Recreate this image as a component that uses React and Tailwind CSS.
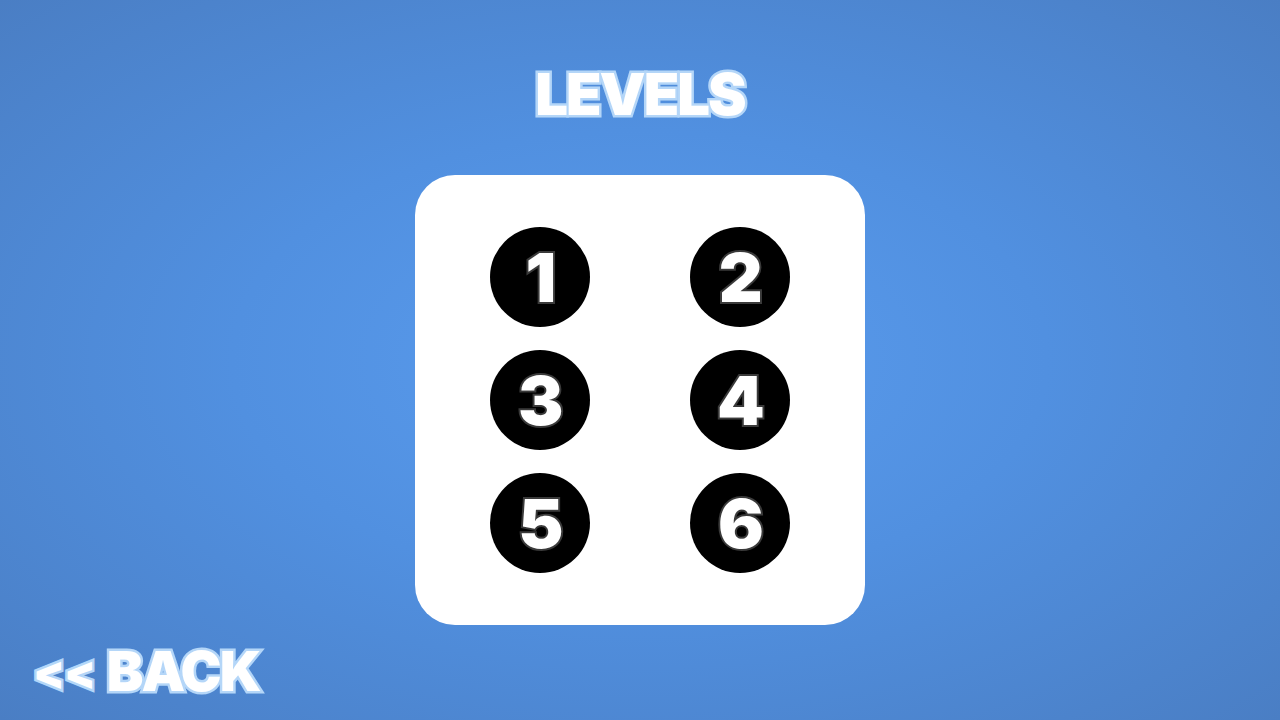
const levels = [1, 2, 3, 4, 5, 6]

const outlined = "text-white [paint-order:stroke_fill] [-webkit-text-stroke:5px_#b4d6f8]"

const LevelButton = ({ n }) => (
    <button className="w-[100px] h-[100px] rounded-full bg-black flex items-center justify-center">
        <span className="text-white text-[68px] leading-none font-black tracking-tight [paint-order:stroke_fill] [-webkit-text-stroke:4px_#3a3a3a] [font-family:Inter,'DejaVu_Sans',sans-serif]">
            {n}
        </span>
    </button>
)

export default function App() {
    return (
        <div className="w-[1280px] h-[720px] flex flex-col items-center bg-[radial-gradient(ellipse_at_center,#5a9cee_0%,#5190e0_45%,#4a7ec4_100%)] [font-family:Inter,'DejaVu_Sans',sans-serif] overflow-hidden">
            <h1 className={`mt-[63px] h-[62px] text-[58px] leading-[62px] font-black tracking-[-2px] ${outlined}`}>
                LEVELS
            </h1>

            <div className="mt-[50px] w-[450px] h-[450px] bg-white rounded-[40px] grid grid-cols-[100px_100px] justify-center content-start gap-x-[100px] gap-y-[23px] pt-[52px]">
                {levels.map((n) => (
                    <LevelButton key={n} n={n} />
                ))}
            </div>

            <div className="self-start mt-[19px] ml-[33px] flex items-center gap-[12px]">
                <span className={`text-[46px] leading-none font-black tracking-[-1px] ${outlined}`}>&lt;&lt;</span>
                <span className={`text-[55px] leading-none font-black tracking-[-2px] ${outlined}`}>BACK</span>
            </div>
        </div>
    )
}
